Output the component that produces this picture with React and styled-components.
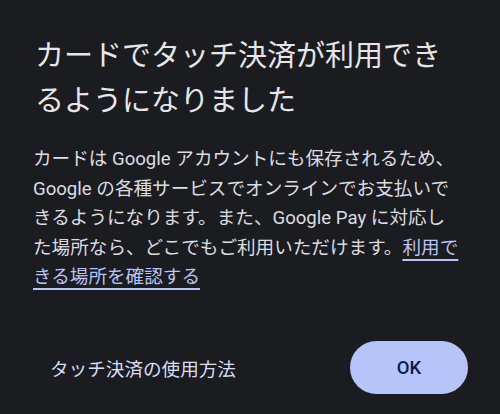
import React from "react";
import styled, { createGlobalStyle } from "styled-components";

const Global = createGlobalStyle`
  html, body { margin: 0; padding: 0; background: #1b1c20; }
  body { font-family: Roboto, "Noto Sans CJK JP", sans-serif; }
`;

const Dialog = styled.div`
  width: 500px;
  height: 414px;
  box-sizing: border-box;
  background: #1b1c20;
  padding: 34px 32px 0 35px;
  display: flex;
  flex-direction: column;
`;

const Title = styled.h1`
  margin: 0;
  font-size: 29px;
  line-height: 45px;
  font-weight: 400;
  color: #e6e6ea;
`;

const Body = styled.p`
  margin: 21px 0 0 -2px;
  font-size: 18.6px;
  line-height: 29.5px;
  color: #dcdde2;
  width: 428px;
`;

const Link = styled.a`
  color: #b9c3f5;
  text-decoration: underline;
  text-underline-offset: 5px;
  text-decoration-thickness: 1.5px;
`;

const Actions = styled.div`
  margin-top: auto;
  margin-bottom: 20px;
  display: flex;
  align-items: center;
  justify-content: space-between;
`;

const TextButton = styled.button`
  background: none;
  border: none;
  padding: 0 0 0 15px;
  font-family: inherit;
  font-size: 18.6px;
  color: #d9dcf5;
  height: 53px;
`;

const FilledButton = styled.button`
  width: 118px;
  height: 53px;
  border: none;
  border-radius: 27px;
  background: #b7c4fa;
  color: #101a48;
  font-family: inherit;
  font-size: 18.5px;
  font-weight: 500;
`;

export default function App() {
  return (
    <>
      <Global />
      <Dialog>
        <Title>カードでタッチ決済が利用できるようになりました</Title>
        <Body>
          カードは Google アカウントにも保存されるため、Google の各種サービスでオンラインでお支払いできるようになります。また、Google Pay に対応した場所なら、どこでもご利用いただけます。<Link href="#">利用できる場所を確認する</Link>
        </Body>
        <Actions>
          <TextButton>タッチ決済の使用方法</TextButton>
          <FilledButton>OK</FilledButton>
        </Actions>
      </Dialog>
    </>
  );
}
